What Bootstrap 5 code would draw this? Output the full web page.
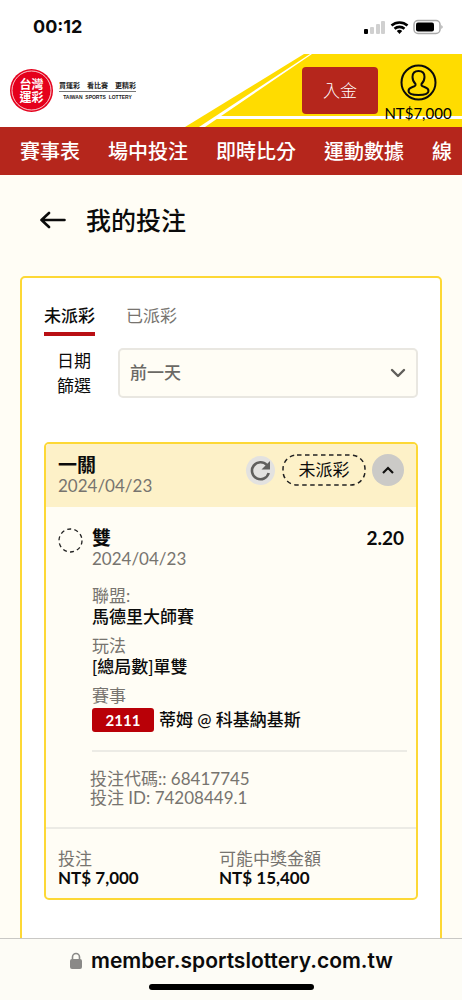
<!DOCTYPE html>
<html lang="zh-Hant">
<head>
<meta charset="utf-8">
<meta name="viewport" content="width=device-width, initial-scale=1">
<title>我的投注</title>
<link href="https://cdn.jsdelivr.net/npm/bootstrap@5.3.0/dist/css/bootstrap.min.css" rel="stylesheet">
<style>
:root { --brand-red: #b5261c; --gold: #fdd835; --cream: #fffdf5; --muted: #77746f; }
body { font-family: Lato, "Noto Sans CJK TC", sans-serif; font-size: 17px; line-height: 21px; color: #0b0b0b; background: var(--cream); }
svg { display: block; flex: none; }
.status-bar { height: 54px; padding: 0 19px 0 33px; font: 700 18px/54px Inter, sans-serif; }
.site-header { height: 73px; }
.header-art { right: 0; top: 0; }
.brand-link { color: #222; padding-left: 10px; gap: 6px; }
.seal { width: 43px; height: 43px; }
.slogan { font-size: 7px; line-height: 12px; font-weight: 700; border-bottom: 1px solid #777; white-space: pre; }
.slogan-en { font: 700 5px/10px "Liberation Sans", sans-serif; }
.deposit { width: 76px; height: 47px; margin: 13px 7px 0 0; background: var(--brand-red); color: #fff; border: 0; border-radius: 4px; font-size: 17px; font-weight: 300; }
.account { color: #000; width: 66px; margin-right: 11px; padding-top: 10px; font-size: 15px; line-height: 24px; }
.main-nav { height: 48px; background: var(--brand-red); padding-left: 20px; gap: 28px; overflow: hidden; font-size: 20px; font-weight: 500; }
.main-nav a { color: #fff; line-height: 48px; text-decoration: none; white-space: nowrap; }
.page-title { font-size: 25px; line-height: 32px; font-weight: 500; }
.title-row { padding: 29px 40px 40px; gap: 20px; }
.panel { margin: 0 20px; padding: 24px 22px 60px; background: #fff; border: 2px solid var(--gold); border-radius: 5px; }
.tabs { gap: 31px; }
.tabs button { border: 0; border-bottom: 4px solid transparent; background: none; padding: 3px 0 6px; color: var(--muted); line-height: 21px; }
.tabs button.active { border-color: #b90f14; color: #0b0b0b; font-weight: 500; }
.filter-label { width: 34px; line-height: 25px; margin-left: 13px; margin-right: 27px; }
.filter-wrap { margin-top: 12px; }
.day-select { height: 50px; border: 2px solid #e9e7e1; border-radius: 5px; background-color: var(--cream); color: #6b6964; font-size: 17px; font-weight: 500; padding-left: 10px; background-position: right 9px center; background-size: 18px;
  background-image: url("data:image/svg+xml,%3Csvg xmlns='http://www.w3.org/2000/svg' viewBox='0 0 18 18'%3E%3Cpath fill='none' stroke='%23605e5a' stroke-width='2.4' stroke-linecap='round' stroke-linejoin='round' d='m3 6 6 6 6-6'/%3E%3C/svg%3E"); }
.bet { margin-top: 44px; border: 2px solid var(--gold); border-radius: 5px; background: var(--cream); overflow: hidden; }
.bet-head { background: #fdf1c8; padding: 10px 12px 11px; }
.strong-lg { font-size: 19px; font-weight: 700; }
.mid { font-weight: 500; }
.sum { font-weight: 700; }
.dim { color: var(--muted); }
.round-btn { border: 0; padding: 0; border-radius: 50%; display: grid; place-items: center; }
.refresh { width: 29px; height: 29px; background: #e3e2e0; margin-right: 7px; }
.collapse-btn { width: 32px; height: 32px; background: #cbcac7; }
.state { margin-right: 6px; }
.state span { position: absolute; inset: 0; line-height: 32px; text-align: center; }
.bet-body { padding: 20px 12px; }
.indent { padding-left: 34px; }
.code { width: 62px; height: 24px; line-height: 24px; border-radius: 3px; background: #b90007; color: #fff; font-size: 15px; font-weight: 700; text-align: center; margin-right: 5px; }
.match-row { line-height: 24px; padding-top: 2px; }
.rule { border-top: 2px solid #ecebe5; margin: 18px -3px 17px 34px; }
.ids { padding-left: 32px; line-height: 19px; }
.bet-foot { border-top: 2px solid #ecebe5; padding: 20px 12px 11px; line-height: 19px; }
.stake { width: 161px; }
.url-bar { height: 62px; border-top: 1px solid #c9c8c5; background: #fdfcf6; font: 600 21px/24px Inter, sans-serif; padding-top: 10px; }
.home-line { width: 165px; height: 6px; border-radius: 3px; background: #000; margin: 11px auto 0; }
</style>
</head>
<body>
<div class="d-flex flex-column vh-100 overflow-hidden">
  <div class="status-bar bg-white d-flex justify-content-between align-items-center flex-shrink-0">
    <span>00:12</span>
    <svg width="80" height="16" viewBox="0 0 80 16" aria-hidden="true">
      <rect x="1" y="10" width="4" height="5" rx="1"/>
      <g fill="#d0d0d0"><rect x="7" y="8" width="4" height="7" rx="1"/><rect x="13" y="5" width="4" height="10" rx="1"/><rect x="18" y="2" width="4" height="13" rx="1"/></g>
      <g fill="none" stroke="#000" stroke-width="2.600"><path d="M28.500 6.500a12 12 0 0 1 16 0"/><path d="M31.500 9.800a7.500 7.500 0 0 1 10 0"/></g>
      <path d="m36.500 15 2.700-3a4 4 0 0 0-5.400 0z"/>
      <rect x="51" y="1.500" width="26" height="13" rx="4" fill="none" stroke="#aaa" stroke-width="1.500"/>
      <rect x="53" y="3.500" width="18" height="9" rx="2"/><path d="M78.500 6q2 2 0 4z" fill="#888"/>
    </svg>
  </div>

  <header class="site-header position-relative bg-white flex-shrink-0">
    <svg class="header-art position-absolute" width="277" height="73" viewBox="0 0 277 73" aria-hidden="true">
      <path fill="#ffdc00" d="M0 73 119 0h158v73z"/>
      <path fill="#fff" d="M20 73 127 0h-2L14 73z"/>
      <path fill="#fff" d="M35 62h242v3H31z"/>
    </svg>
    <div class="position-relative d-flex h-100">
      <a href="#" class="brand-link d-flex text-decoration-none align-items-center me-auto">
        <svg class="seal" viewBox="0 0 43 43" role="img" aria-label="台灣運彩">
          <circle cx="21.500" cy="21.500" r="21.500" fill="#e5001c"/><circle cx="21.500" cy="21.500" r="19.500" fill="none" stroke="#fff" stroke-width=".8"/>
          <text fill="#fff" font-size="12" font-weight="700" text-anchor="middle" font-family="Noto Sans CJK TC, sans-serif"><tspan x="21.500" y="20">台灣</tspan><tspan x="21.500" y="33">運彩</tspan></text>
        </svg>
        <div class="text-center">
          <div class="slogan">買運彩　看比賽　更精彩</div>
          <div class="slogan-en">TAIWAN&nbsp; SPORTS&nbsp; LOTTERY</div>
        </div>
      </a>
      <button class="deposit btn align-self-start p-0" type="button">入金</button>
      <a href="#" class="account d-flex flex-column align-items-center text-decoration-none">
        <svg width="37" height="37" viewBox="0 0 37 37" fill="none" stroke="#0b0b0b" stroke-width="2" aria-hidden="true">
          <circle cx="18.500" cy="18.500" r="17"/>
          <path d="M15.500 20c-2-2-3-4-3-7 0-4 2.500-6 6-6s6 2 6 6c0 3-1 5-3 7-.5 2 1 2.500 3 3 3 1 4 2 4 4 0 3-4.500 4-10 4s-10-1-10-4c0-2 1-3 4-4 2-.5 3.500-1 3-3z"/>
        </svg>
        <span>NT$7,000</span>
      </a>
    </div>
  </header>

  <nav class="main-nav d-flex flex-shrink-0" aria-label="主選單">
    <a href="#">賽事表</a><a href="#">場中投注</a><a href="#">即時比分</a><a href="#">運動數據</a><a href="#">線</a>
  </nav>

  <main class="flex-grow-1 overflow-hidden">
    <div class="title-row d-flex align-items-center">
      <a href="#" aria-label="返回"><svg width="26" height="18" viewBox="0 0 26 18" fill="none" stroke="#0b0b0b" stroke-width="2.600" stroke-linecap="round" stroke-linejoin="round"><path d="M24.500 9H1.500M9 2 1.500 9 9 16"/></svg></a>
      <h1 class="page-title m-0">我的投注</h1>
    </div>

    <section class="panel">
      <div class="tabs d-flex" role="tablist">
        <button type="button" role="tab" class="active" aria-selected="true">未派彩</button>
        <button type="button" role="tab" aria-selected="false">已派彩</button>
      </div>
      <div class="filter-wrap d-flex">
        <label class="filter-label flex-shrink-0" for="day">日期篩選</label>
        <select id="day" class="day-select form-select shadow-none"><option>前一天</option></select>
      </div>

      <article class="bet">
        <div class="bet-head d-flex justify-content-between">
          <div><div class="strong-lg">一關</div><div class="dim">2024/04/23</div></div>
          <div class="d-flex align-items-center align-self-start">
            <button type="button" class="round-btn refresh" aria-label="重新整理"><svg width="21" height="21" viewBox="0 0 21 21"><path d="M16.800 5A8.500 8.500 0 1 0 18.700 13" fill="none" stroke="#605f5d" stroke-width="2.600"/><path d="M20 1v8.500h-8.500z" fill="#605f5d"/></svg></button>
            <div class="state position-relative"><svg width="84" height="32" viewBox="0 0 84 32" aria-hidden="true"><rect x="1" y="1" width="82" height="30" rx="14" fill="none" stroke="#222" stroke-width="1.500" stroke-dasharray="4.500 3.500"/></svg><span>未派彩</span></div>
            <button type="button" class="round-btn collapse-btn" aria-label="收合"><svg width="12" height="8" viewBox="0 0 12 8" fill="none" stroke="#111" stroke-width="2.200"><path d="m1 7 5-5 5 5"/></svg></button>
          </div>
        </div>

        <div class="bet-body">
          <div class="d-flex">
            <svg width="34" height="26" viewBox="0 0 34 26" aria-hidden="true"><circle cx="12.500" cy="13.500" r="11.500" fill="none" stroke="#222" stroke-width="1.300" stroke-dasharray="4 3.220"/></svg>
            <div class="me-auto"><div class="strong-lg">雙</div><div class="dim">2024/04/23</div></div>
            <div class="strong-lg">2.20</div>
          </div>
          <div class="indent pt-3">
            <div class="dim">聯盟:</div><div class="mid mb-2">馬德里大師賽</div>
            <div class="dim">玩法</div><div class="mid mb-2">[總局數]單雙</div>
            <div class="dim">賽事</div>
            <div class="match-row mid d-flex"><span class="code">2111</span>蒂姆 @ 科基納基斯</div>
          </div>
          <div class="rule"></div>
          <div class="ids dim">投注代碼:: 68417745<br>投注 ID: 74208449.1</div>
        </div>

        <div class="bet-foot d-flex">
          <div class="stake"><div class="dim">投注</div><div class="sum">NT$ 7,000</div></div>
          <div><div class="dim">可能中獎金額</div><div class="sum">NT$ 15,400</div></div>
        </div>
      </article>
    </section>
  </main>

  <footer class="url-bar flex-shrink-0">
    <div class="d-flex justify-content-center align-items-center gap-2">
      <svg width="14" height="18" viewBox="0 0 14 18" aria-hidden="true"><rect x="1" y="7" width="12" height="10" rx="2" fill="#8a8987"/><path d="M3.500 8V5a3.500 3.500 0 0 1 7 0v3" fill="none" stroke="#8a8987" stroke-width="1.600"/></svg>
      <span>member.sportslottery.com.tw</span>
    </div>
    <div class="home-line"></div>
  </footer>
</div>
<script src="https://cdn.jsdelivr.net/npm/bootstrap@5.3.0/dist/js/bootstrap.bundle.min.js"></script>
</body>
</html>
